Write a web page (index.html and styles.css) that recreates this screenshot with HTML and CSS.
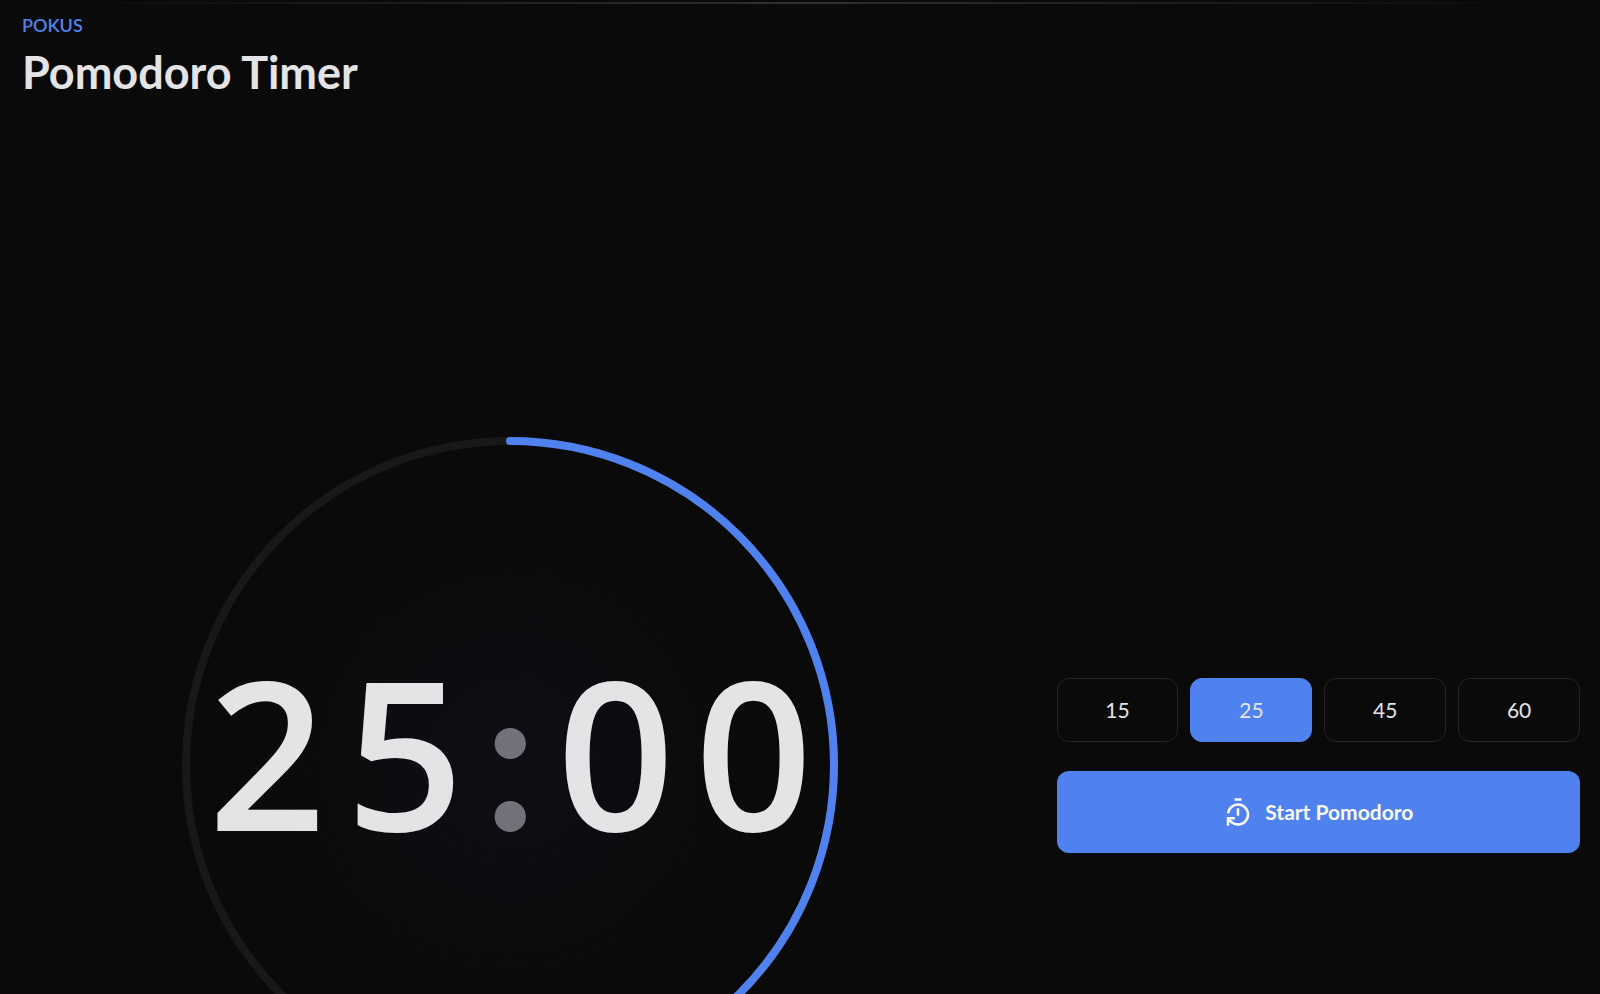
FILE: index.html
```html
<!DOCTYPE html>
<html lang="en">
<head>
  <meta charset="utf-8">
  <meta name="viewport" content="width=device-width, initial-scale=1">
  <title>Pomodoro Timer</title>
  <link rel="stylesheet" href="styles.css">
</head>
<body>
  <div class="divider"></div>
  <main class="page">
    <header class="header">
      <p class="eyebrow">POKUS</p>
      <h1 class="title">Pomodoro Timer</h1>
    </header>
    <section class="timer">
      <div class="dial">
        <svg class="ring" viewBox="0 0 656 656" fill="none" stroke-width="8" aria-hidden="true">
          <circle class="ring-track" cx="328" cy="328" r="324"/>
          <path class="ring-progress" d="M328 4A324 324 0 0 1 328 652" stroke-linecap="round"/>
        </svg>
        <div class="clock" role="timer">
          <span>2</span><span>5</span><span class="colon">:</span><span>0</span><span>0</span>
        </div>
      </div>
      <div class="controls">
        <div class="presets">
          <button class="preset" type="button">15</button>
          <button class="preset preset-active" type="button" aria-pressed="true">25</button>
          <button class="preset" type="button">45</button>
          <button class="preset" type="button">60</button>
        </div>
        <button class="start" type="button">
          <svg class="start-icon" viewBox="0 0 24 24" fill="none" stroke="currentColor" stroke-width="2" stroke-linecap="butt" stroke-linejoin="miter" aria-hidden="true">
            <path d="M9.200 2h5.600"/>
            <path d="M12 15v-6"/>
            <path d="M4 13a8 8 0 0 1 8-7 8 8 0 1 1-5.300 14L4 17.600"/>
            <path d="M9.500 17H4v6"/>
          </svg>
          <span>Start Pomodoro</span>
        </button>
      </div>
    </section>
  </main>
</body>
</html>
```
FILE: styles.css
```css
* {
  box-sizing: border-box;
}

html {
  background: #0a0a0a;
  scrollbar-width: none;
}

body {
  margin: 0;
  padding-top: 2px;
  color: #e4e4e7;
  font-family: Lato, "Open Sans", sans-serif;
}

.divider {
  height: 2px;
  margin: 0 4%;
  background: linear-gradient(90deg, transparent, #303030, transparent);
}

.page {
  padding: 8px 20px 20px 22px;
}

.eyebrow {
  margin: 0;
  color: #4f82ee;
  font-size: 18px;
  font-weight: 600;
  line-height: 26px;
}

.title {
  margin: 4px 0 0;
  font-size: 45px;
  font-weight: 700;
  line-height: 60px;
}

.timer {
  display: grid;
  grid-template-columns: minmax(0, 976fr) minmax(0, 523fr);
  align-items: center;
  column-gap: 58px;
  padding-top: 335px;
}

.dial {
  display: grid;
  place-items: center;
  justify-self: center;
  width: 100%;
  max-width: 656px;
  border-radius: 50%;
  background: radial-gradient(circle closest-side, #0d0f14, #0a0a0a 80%);
}

.ring,
.clock {
  grid-area: 1 / 1;
}

.ring {
  display: block;
  width: 100%;
}

.ring-track {
  stroke: #181818;
}

.ring-progress {
  stroke: #4f82ee;
}

.clock {
  display: flex;
  align-items: baseline;
  gap: 20px;
  padding-bottom: 28px;
  font-family: "Open Sans", sans-serif;
  font-size: 206px;
  font-weight: 600;
  line-height: 240px;
}

.colon {
  color: #71717a;
  font-family: Lato, sans-serif;
  font-weight: 700;
}

.controls {
  display: grid;
  gap: 29px;
}

.presets {
  display: grid;
  grid-template-columns: repeat(4, 1fr);
  gap: 12px;
}

.preset,
.start {
  border-radius: 12px;
  color: #e4e4e7;
  font-family: inherit;
  font-size: 21px;
  cursor: pointer;
}

.preset {
  height: 64px;
  padding: 0;
  border: 1px solid #242424;
  background: transparent;
  font-weight: 400;
}

.preset-active {
  border-color: #4f82ee;
  background: #4f82ee;
}

.start {
  display: flex;
  align-items: center;
  justify-content: center;
  gap: 12px;
  height: 82px;
  border: 0;
  background: #4f82ee;
  color: #fafafa;
  font-weight: 700;
}

.start-icon {
  width: 30px;
  height: 30px;
}
```
